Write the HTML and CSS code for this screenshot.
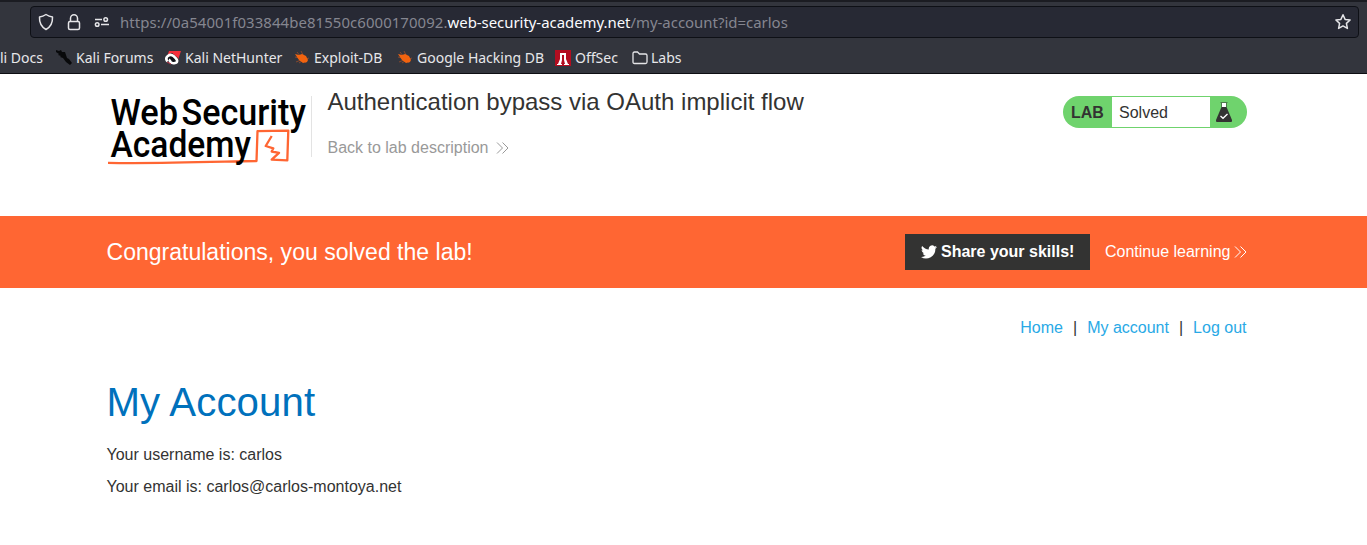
FILE: index.html
```html
<!DOCTYPE html>
<html lang="en">
<head>
<meta charset="utf-8">
<title>Authentication bypass via OAuth implicit flow</title>
<link rel="stylesheet" href="styles.css">
</head>
<body>
<div class="browser">
  <div class="urlbar">
    <svg class="shield" width="16" height="18" viewBox="0 0 16 18"><path d="M8 1.500Q11 3.500 14.500 4C14.800 10 12.500 14 8 16.500 3.500 14 1.200 10 1.500 4Q5 3.500 8 1.500Z"/></svg>
    <svg class="lock" width="14" height="18" viewBox="0 0 14 18"><rect x="1.500" y="8.500" width="11" height="8" rx="1.500"/><path d="M3.500 8.500V5.200a3.500 3.500 0 0 1 7 0v3.300"/></svg>
    <svg class="tune" width="16" height="12" viewBox="0 0 16 12"><path d="M1 3.500H8M7 8.500H15"/><circle cx="11.700" cy="3.500" r="1.800"/><circle cx="3.200" cy="8.500" r="1.800"/></svg>
    <div class="url"><span>https://0a54001f033844be81550c6000170092.</span><b>web-security-academy.net</b>/my-account?id=carlos</div>
    <svg class="star" width="18" height="18" viewBox="0 0 18 18"><path d="m9 1.800 2.100 4.600 5 .6-3.700 3.400 1 5L9 12.900l-4.400 2.500 1-5L1.900 7l5-.6Z"/></svg>
  </div>
  <div class="bookmarks">
    <span class="mark m-docs">li Docs</span>
    <span class="mark m-forums"><svg width="16" height="16" viewBox="0 0 16 16"><path fill="#08090b" d="m0 0 3 1 2-1 1 2h3l1 3 1 3 2 1 3 4-1 1-1 1-4-3-3-4-3-1 1-1-3-1 1-1-3-2Z"/></svg>Kali Forums</span>
    <span class="mark m-hunter"><svg width="16" height="16" viewBox="0 0 16 16"><path fill="#f52f3b" d="M4 1h12l-3 9-2 3-5-6-4 0Z"/><path fill="#111318" d="m2 5 5-2 6 5 1 4-5 2-5-1Z"/><path fill="none" stroke="#fff" stroke-width="2.600" d="M2.500 11.500C-1 7 5 3 8.500 6S14 12 10 13 4 11 5.500 9.500"/><path stroke="#c6354a" d="m2 12 4 2"/></svg>Kali NetHunter</span>
    <span class="mark m-exploit"><svg width="16" height="16" viewBox="0 0 16 16"><path stroke="#9a4c2b" stroke-width=".8" d="m3 2 4 5M7 1l2 4M1 7l4 1M2 12l5-2M5 13l3-2M12 13l-1-2M15 8l-3 1"/><path fill="#f2630f" d="m1 4 4 1 3-1 4 2 2 4-1 2-4 1-4-3Z"/></svg>Exploit-DB</span>
    <span class="mark m-google"><svg width="16" height="16" viewBox="0 0 16 16"><path stroke="#9a4c2b" stroke-width=".8" d="m3 2 4 5M7 1l2 4M1 7l4 1M2 12l5-2M5 13l3-2M12 13l-1-2M15 8l-3 1"/><path fill="#f2630f" d="m1 4 4 1 3-1 4 2 2 4-1 2-4 1-4-3Z"/></svg>Google Hacking DB</span>
    <span class="mark m-offsec"><svg width="16" height="16" viewBox="0 0 16 16"><path fill="#b30d20" d="M0 0h16v16H0z"/><path fill="#fff" d="M5 3h6v6l2 5h1v1H9v-1h1L9 10V5H7v5l-1 4h1v1H2v-1h1l2-5Z"/></svg>OffSec</span>
    <span class="mark m-labs"><svg width="16" height="16" viewBox="0 0 16 16"><path class="line" d="M1 12V3.500Q1 2 2.500 2h3L7.500 4h6Q15 4 15 5.500V12q0 1.500-1.500 1.500h-11Q1 13.500 1 12Z"/></svg>Labs</span>
  </div>
</div>
<header class="lab-header">
  <svg class="logo" width="200" height="72" viewBox="0 0 200 72">
    <path class="mark-line" d="M1 68.800C45 69.800 100 68 149.500 67L150.500 37.200l30.800-.6-1 29.800-15.600-.7 7.300-6.900-7.300-1.300 1.600-3.200-7.600-2.300 6-10"/>
    <g class="logo-text"><text x="3.500" y="31" textLength="67.500" lengthAdjust="spacingAndGlyphs">Web</text><text x="74.500" y="31" textLength="124.500" lengthAdjust="spacingAndGlyphs">Security</text><text x="3.500" y="63" textLength="140.500" lengthAdjust="spacingAndGlyphs">Academy</text></g>
  </svg>
  <div class="intro">
    <h2>Authentication bypass via OAuth implicit flow</h2>
    <a class="back">Back to lab description<svg width="13" height="12" viewBox="0 0 13 12"><path d="m1 .5 5.500 5.500L1 11.500M6.500.5 12 6l-5.500 5.500"/></svg></a>
  </div>
  <div class="status"><strong>LAB</strong><span>Solved</span>
    <svg width="18" height="20" viewBox="0 0 18 20"><path fill="#fff" d="M7 1h4v5H7z"/><path fill="#333332" d="M6.500 5h5L17 18q.5 2-1 2H2q-1.500 0-1-2Z"/><path stroke="#4c7c4a" stroke-width="1" d="M5.500.5h7M6.500.5V5M11.500.5V5"/><path fill="none" stroke="#fff" stroke-width="1.300" d="m5.500 14 2.500 2.300 4.500-4.300"/></svg>
  </div>
</header>
<section class="banner">
  <h4>Congratulations, you solved the lab!</h4>
  <a class="share"><svg width="16" height="14" viewBox="0 0 24 20"><path fill="#fff" d="M24 2.400c-.9.400-1.800.7-2.800.8A5 5 0 0 0 23.300.5c-1 .6-2 1-3.100 1.200A4.900 4.900 0 0 0 11.800 6.200C7.700 6 4.100 4 1.700 1A4.900 4.900 0 0 0 3.200 7.600c-.8 0-1.600-.2-2.200-.6 0 2.300 1.600 4.400 3.900 4.900-.7.200-1.500.2-2.200.1.600 2 2.400 3.400 4.600 3.400A9.900 9.900 0 0 1 0 17.500 14 14 0 0 0 21.500 5c1-.7 1.800-1.600 2.500-2.600Z"/></svg>Share your skills!</a>
  <a class="continue">Continue learning<svg width="13" height="12" viewBox="0 0 13 12"><path d="m1 .5 5.500 5.500L1 11.500M6.500.5 12 6l-5.500 5.500"/></svg></a>
</section>
<main>
  <nav><a>Home</a><i>|</i><a>My account</a><i>|</i><a>Log out</a></nav>
  <h1>My Account</h1>
  <p>Your username is: carlos</p>
  <p>Your email is: carlos@carlos-montoya.net</p>
</main>
</body>
</html>
```
FILE: styles.css
```css
* { box-sizing: border-box; }
body { margin: 0; height: 545px; overflow: hidden; background: #fff; color: #333332; font: 16px/20px "Liberation Sans", Arial, sans-serif; }
svg { display: block; flex: none; }
h1, h2, h4, p { margin: 0; font-weight: 400; white-space: nowrap; }
.browser { height: 74px; padding: 4px 8px 0 0; background: #33353d; border-top: 2px solid #1b1c22; border-bottom: 1px solid #0d0e13; font: 14.950px/20px "Noto Sans", sans-serif; color: #e7e7ea; }
.urlbar { display: flex; align-items: center; height: 32px; margin-left: 30px; padding: 0 6px 0 7px; border: 1px solid #0e1016; border-radius: 4px; background: #272934; }
.urlbar svg { fill: none; stroke: #e5e5e8; stroke-width: 1.500; stroke-linejoin: round; }
.lock { margin-left: 13px; }
.tune { margin-left: 13px; }
.url { margin-left: 10px; color: #858690; white-space: nowrap; }
.url span { letter-spacing: .075px; }
.url b { color: #fbfbfe; font-weight: 400; letter-spacing: -.03px; }
.star { margin-left: auto; }
.bookmarks { display: flex; align-items: flex-start; height: 35px; padding-top: 10px; font-size: 14px; line-height: 20px; }
.mark { display: flex; align-items: center; gap: 4px; flex: none; white-space: nowrap; }
.m-docs { width: 56px; }
.m-forums { width: 109px; }
.m-hunter { width: 129px; }
.m-exploit { width: 103px; }
.m-google { width: 158px; }
.m-offsec { width: 76px; }
.m-labs { gap: 3px; margin-left: 1px; }
.line { fill: none; stroke: #e5e5e8; stroke-width: 1.300; }
.lab-header { display: flex; align-items: flex-start; width: 1140px; height: 142px; margin-left: 107px; }
.logo { margin-top: 20px; overflow: visible; }
.logo-text { font-family: Roboto, sans-serif; font-size: 36.500px; font-weight: 500; fill: #000; }
.mark-line { fill: none; stroke: #ff6633; stroke-width: 2.300; stroke-linejoin: round; }
.intro { height: 61px; margin: 22px 0 0 4px; padding-left: 15.500px; border-left: 1px solid #e3e3e3; }
.intro h2 { margin-top: -8px; font-size: 24px; line-height: 28px; }
.back { display: flex; align-items: center; gap: 8px; margin-top: 22px; color: #999; }
.back svg, .continue svg { fill: none; stroke: currentColor; stroke-width: 1; }
.status { display: flex; align-items: stretch; width: 184px; height: 32px; margin: 22px 0 0 auto; padding: 1px 0; border-radius: 16px; background: #6fd36d; line-height: 32px; }
.status strong { width: 49px; padding-left: 8px; }
.status span { width: 98px; padding-left: 7px; background: #fff; }
.status svg { margin: 5px 0 0 5px; }
.banner { display: flex; align-items: center; height: 72px; padding: 0 120px 0 106.500px; background: #ff6633; color: #fff; }
.banner h4 { font-size: 23.040px; line-height: 28px; }
.share { display: flex; align-items: center; gap: 4px; width: 185px; height: 36px; margin-left: auto; padding-left: 16px; background: #333332; font-weight: 700; white-space: nowrap; }
.continue { display: flex; align-items: center; justify-content: space-between; width: 142px; margin-left: 15px; white-space: nowrap; }
main { width: 1140px; margin-left: 106.500px; padding-top: 30px; }
nav { display: flex; justify-content: flex-end; gap: 10px; }
nav a { color: #29a9e6; }
nav i { font-style: normal; color: #333332; }
h1 { margin-top: 42px; color: #0071bc; font-size: 40.200px; line-height: 46px; letter-spacing: .1px; }
p { margin-top: 12px; }
h1 + p { margin-top: 19px; }
```
